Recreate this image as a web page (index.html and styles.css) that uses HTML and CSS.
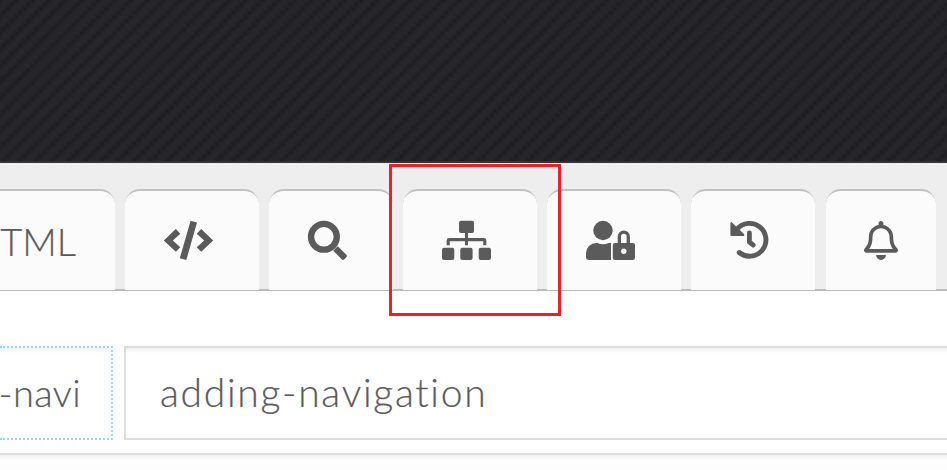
FILE: index.html
```html
<!DOCTYPE html>
<html lang="en">
<head>
<meta charset="utf-8">
<title>adding-navigation</title>
<link rel="stylesheet" href="styles.css">
</head>
<body>
<header class="banner"></header>
<nav class="tabs">
  <a class="tab tab-html"><span class="label">TML</span></a>
  <a class="tab"><svg width="49" height="39" viewBox="0 0 49 39"><path d="M26.6-.2 33 1.6 22.3 39 15.8 37.2ZM11.8 8l4.5 4.7-7.5 6.8 7.5 6.7-4.5 4.6L-.2 19.5ZM37.2 8l-4.5 4.7 7.5 6.8-7.5 6.7 4.5 4.6 12-11.3Z"/></svg></a>
  <a class="tab"><svg width="39" height="39" viewBox="0 0 39 39"><circle class="line" cx="15.9" cy="15.8" r="12.9" stroke-width="6.3"/><path d="M25.2 29.8 29.8 25.2 38.3 33.7Q39.5 35 38.3 36.3L36.3 38.3Q35 39.5 33.7 38.3Z"/></svg></a>
  <a class="tab"><svg width="49" height="39" viewBox="0 0 49 39"><rect x="17" y="-.3" width="15" height="12.3" rx="2"/><rect y="26.7" width="12.3" height="12.3" rx="2"/><rect x="18.3" y="26.7" width="12.3" height="12.3" rx="2"/><rect x="36.7" y="26.7" width="12.3" height="12.3" rx="2"/><path class="line" stroke-width="3.1" d="M24.5 11V24.3M6.2 24.3V19.5Q6.2 18.6 7.1 18.6H41.9Q42.8 18.6 42.8 19.5V24.3"/></svg></a>
  <a class="tab"><svg width="49" height="39" viewBox="0 0 49 39"><circle cx="17" cy="9.5" r="9.7"/><path d="M10.2 22H11.5Q17 24.4 22.6 22H25V39H3Q0 39 0 36V32.2A10.2 10.2 0 0 1 10.2 22Z"/><path fill-rule="evenodd" d="M29 22H31.7V15.5A6.1 6.1 0 0 1 43.9 15.5V22H46.8Q49 22 49 24.2V36.8Q49 39 46.8 39H29Q26.8 39 26.8 36.8V24.2Q26.8 22 29 22ZM35 22H40.6V15.5A2.8 2.8 0 0 0 35 15.5ZM37.8 27.6A2.7 2.7 0 1 0 37.8 33A2.7 2.7 0 1 0 37.8 27.6Z"/></svg></a>
  <a class="tab"><svg width="39" height="39" viewBox="0 0 39 39"><path class="line round" stroke-width="4.9" d="M9.2 31.5A16.4 16.4 0 1 0 7 8.2"/><path d="M.4 2.2Q1-.2 2.5 2L14 12.9Q15 15 13 15H1.6Q.4 15 .4 13.8Z"/><path class="line round" stroke-width="4.8" d="M19.4 12V21L23.3 24.1"/></svg></a>
  <a class="tab tab-bell"><svg width="34" height="39" viewBox="0 0 448 512"><path d="M439.39 362.29c-19.32-20.76-55.47-51.99-55.47-154.29 0-77.7-54.48-139.9-127.94-155.16V32c0-17.67-14.32-32-31.98-32s-31.98 14.33-31.98 32v20.84C118.56 68.1 64.08 130.3 64.08 208c0 102.3-36.15 133.53-55.47 154.29-6 6.45-8.66 14.16-8.61 21.71.11 16.4 12.98 32 32.1 32h383.8c19.12 0 32-15.6 32.1-32 .05-7.55-2.61-15.27-8.61-21.71zM67.53 368c21.22-27.97 44.42-74.33 44.53-159.42 0-.2-.06-.38-.06-.58 0-61.86 50.14-112 112-112s112 50.14 112 112c0 .2-.06.38-.06.58.11 85.1 23.31 131.46 44.53 159.42H67.53zM224 512c35.32 0 63.97-28.65 63.97-64H160.03c0 35.35 28.65 64 63.97 64z"/></svg></a>
</nav>
<main class="fields">
  <div class="field field-short"><span class="label tail">-navi</span></div>
  <div class="field field-name"><span class="label name">adding-navigation</span></div>
</main>
<footer class="foot"></footer>
<div class="highlight"></div>
</body>
</html>
```
FILE: styles.css
```css
* { box-sizing: border-box; }
body {
  margin: 0;
  width: 947px;
  height: 470px;
  overflow: hidden;
  background: #fff;
  color: #5b5b5b;
  font: 300 38px/46px Lato, "Open Sans", sans-serif;
  font-variant-ligatures: none;
}
.banner {
  height: 163px;
  border-bottom: 2px solid #333335;
  background:
    repeating-linear-gradient(45deg, rgba(40, 40, 46, .45) 0, rgba(40, 40, 46, 0) 2.9px, rgba(40, 40, 46, .45) 5.8px),
    repeating-linear-gradient(135deg, #1a1a1f 0, #25252a 4px, #25252a 7.6px, #1a1a1f 11.6px);
}
.tabs {
  display: flex;
  gap: 10px;
  height: 128px;
  padding-top: 26px;
  background: linear-gradient(#bbb, #bbb) bottom / 100% 2px no-repeat #eee;
}
.tab {
  flex: none;
  display: flex;
  height: 102px;
  padding: 30px 46px 0 39px;
  border-top: 2px solid #c0c0c0;
  border-bottom: 1px solid #bbb;
  border-radius: 15px 15px 0 0;
  background: #fbfbfb;
}
.tab-html {
  width: 115px;
  padding: 27px 39px 0 0;
  justify-content: flex-end;
  border-top-left-radius: 0;
}
.tab-bell { margin-left: 1px; padding: 30px 38px 0; }
.tab svg { display: block; overflow: visible; fill: #5b5b5b; }
.tab .line { fill: none; stroke: #5b5b5b; }
.tab .round { stroke-linecap: round; stroke-linejoin: round; }
.label { white-space: nowrap; -webkit-text-stroke: .2px #5b5b5b; }
.name { font-size: 39px; letter-spacing: 1.7px; }
.tail { font-size: 38px; letter-spacing: .4px; margin-right: -1px; }
.fields { display: flex; gap: 11px; height: 162px; padding-top: 55px; }
.field {
  height: 94px;
  padding-top: 21px;
  border: 2px solid #ddd;
  background: linear-gradient(#f0f0f0, #fff 5px) padding-box;
}
.field-short {
  display: flex;
  justify-content: flex-end;
  width: 113px;
  padding-right: 31px;
  border: 2px dotted #8ddaff;
  border-left: 0;
}
.field-name { flex: 1; padding-left: 34px; border-right: 0; }
.foot {
  height: 17px;
  border-top: 2px solid #ddd;
  background: linear-gradient(#f1f1f1, #fdfdfd 6px);
}
.highlight {
  position: absolute;
  left: 389px;
  top: 164px;
  width: 172px;
  height: 152px;
  border: 3px solid #ee2027;
}
```
